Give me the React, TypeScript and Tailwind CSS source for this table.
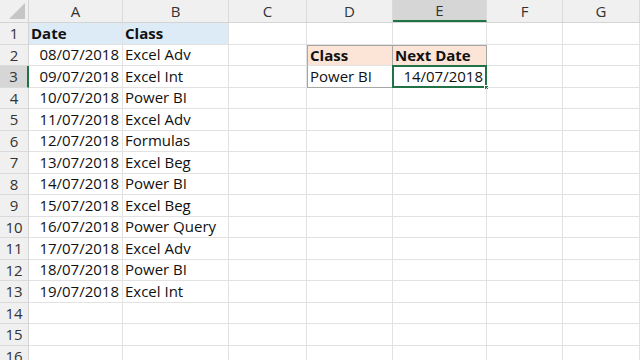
import React from "react";

const cols = ["A", "B", "C", "D", "E", "F", "G"];
const widths = [94, 106, 78, 86, 94, 76, 77];

const data: [string, string][] = [
  ["08/07/2018", "Excel Adv"],
  ["09/07/2018", "Excel Int"],
  ["10/07/2018", "Power BI"],
  ["11/07/2018", "Excel Adv"],
  ["12/07/2018", "Formulas"],
  ["13/07/2018", "Excel Beg"],
  ["14/07/2018", "Power BI"],
  ["15/07/2018", "Excel Beg"],
  ["16/07/2018", "Power Query"],
  ["17/07/2018", "Excel Adv"],
  ["18/07/2018", "Power BI"],
  ["19/07/2018", "Excel Int"],
];

type Cell = { text?: string; bold?: boolean; right?: boolean; bg?: string; cls?: string };

function getCell(row: number, col: number): Cell {
  if (row === 1) {
    if (col === 0) return { text: "Date", bold: true, bg: "bg-[#ddebf7]" };
    if (col === 1) return { text: "Class", bold: true, bg: "bg-[#ddebf7]" };
  }
  if (row >= 2 && row <= 13) {
    const d = data[row - 2];
    if (col === 0) return { text: d[0], right: true };
    if (col === 1) return { text: d[1] };
  }
  if (row === 2) {
    if (col === 3) return { text: "Class", bold: true, bg: "bg-[#fce4d6]" };
    if (col === 4) return { text: "Next Date", bold: true, bg: "bg-[#fce4d6]" };
  }
  if (row === 3) {
    if (col === 3) return { text: "Power BI" };
    if (col === 4) return { text: "14/07/2018", right: true };
  }
  return {};
}

export default function App() {
  const rows = Array.from({ length: 16 }, (_, i) => i + 1);
  return (
    <div
      className="w-[640px] h-[360px] overflow-hidden bg-white text-[#111]"
      style={{ fontFamily: '"Open Sans", "Liberation Sans", sans-serif' }}
    >
      {/* Column header row */}
      <div className="flex h-[23px] bg-[#f0f0f0] border-b border-[#d4d4d4]">
        <div className="w-[29px] shrink-0 relative border-r border-[#d4d4d4]">
          <svg className="absolute right-[3px] bottom-[3px]" width="16" height="16" viewBox="0 0 16 16">
            <polygon points="16,0 16,16 0,16" fill="#c6c6c6" />
          </svg>
        </div>
        {cols.map((c, i) => (
          <div
            key={c}
            style={{ width: widths[i] }}
            className={
              "shrink-0 flex items-center justify-center text-[15px] text-[#333] border-r border-[#dadada] " +
              (c === "E" ? "bg-[#d6d6d6] border-b-2 border-b-[#217346] text-[#1e6b41]" : "")
            }
          >
            {c}
          </div>
        ))}
      </div>
      {rows.map((r) => (
        <div key={r} className="flex h-[21.5px]">
          <div
            className={
              "w-[29px] shrink-0 flex items-center justify-center text-[15px] text-[#333] border-b border-[#dadada] " +
              (r === 3
                ? "bg-[#d6d6d6] border-r-2 border-r-[#217346] text-[#1e6b41]"
                : "bg-[#f0f0f0] border-r border-r-[#d4d4d4]")
            }
          >
            {r}
          </div>
          {cols.map((c, ci) => {
            const cell = getCell(r, ci);
            let extra = "";
            if (r === 2 && (ci === 3 || ci === 4)) extra += " border-t border-t-[#a6a6a6]";
            if ((r === 2 || r === 3) && ci === 3) extra += " border-l border-l-[#a6a6a6]";
            if (r === 2 && ci === 3) extra += " !border-r-[#a6a6a6]";
            if (r === 3 && ci === 3) extra += " !border-b-[#a6a6a6] !border-r-[#a6a6a6]";
            if (r === 2 && ci === 4) extra += " !border-r-[#a6a6a6] !border-b-[#a6a6a6]";
            return (
              <div
                key={c}
                style={{ width: widths[ci] }}
                className={
                  "relative shrink-0 flex items-center overflow-visible whitespace-nowrap text-[15px] leading-none border-r border-b border-[#e2e2e2] " +
                  (cell.right ? "justify-end pr-[3px] " : "pl-[2px] ") +
                  (cell.bold ? "font-bold " : "") +
                  (cell.bg ?? "") +
                  extra
                }
              >
                {cell.text}
                {r === 3 && ci === 4 && (
                  <div className="absolute left-[-1px] top-[-1px] right-[-1px] bottom-[-1px] border-2 border-[#217346] pointer-events-none">
                    <div className="absolute right-[-4px] bottom-[-4px] w-[5px] h-[5px] bg-[#217346] border border-white" />
                  </div>
                )}
              </div>
            );
          })}
        </div>
      ))}
    </div>
  );
}
